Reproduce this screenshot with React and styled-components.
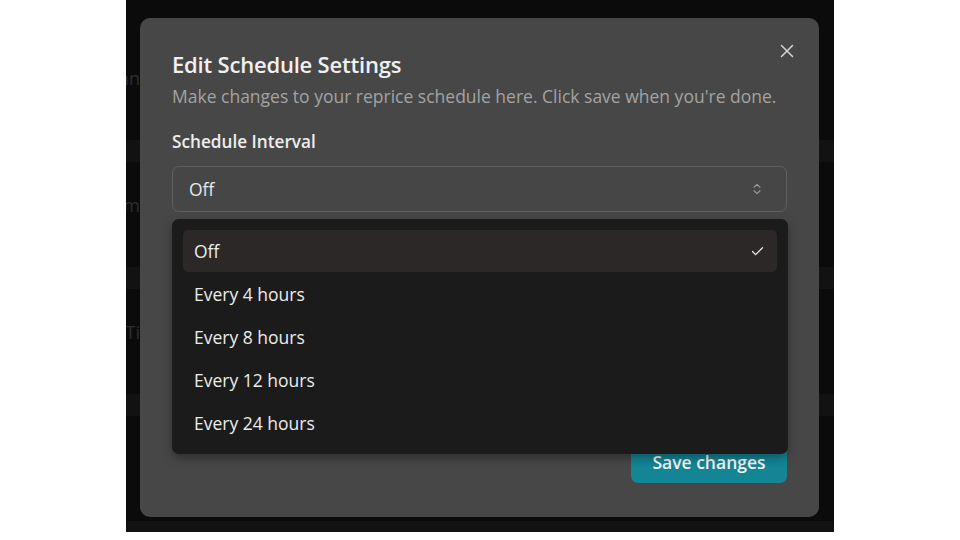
import React from 'react'
import styled, { createGlobalStyle } from 'styled-components'
import { X, Check, ChevronsUpDown } from 'lucide-react'

const GlobalStyle = createGlobalStyle`
  body {
    margin: 0;
    background: #ffffff;
    font-family: "Open Sans", "Noto Sans", sans-serif;
  }
`

const Page = styled.div`
  width: 960px;
  height: 540px;
  display: flex;
  justify-content: center;
`

const Screen = styled.div`
  position: relative;
  width: 708px;
  height: 532px;
  background: #0b0b0b;
  overflow: hidden;
`

const Table = styled.div`
  display: flex;
  flex-direction: column;
  padding-top: 35px;
`

const Row = styled.div`
  height: 105px;
  box-sizing: border-box;
  padding-bottom: 20px;
  display: flex;
  align-items: center;
`

const Band = styled.div`
  height: 22px;
  background: #121212;
`

const Cell = styled.div`
  width: 14px;
  overflow: hidden;
  display: flex;
  justify-content: flex-end;
  white-space: nowrap;
  color: #2e2e2e;
  font-size: 18px;
`

const Modal = styled.div`
  position: absolute;
  left: 14px;
  top: 18px;
  width: 679px;
  height: 499px;
  box-sizing: border-box;
  padding: 32px 32px 34px;
  background: #474747;
  border-radius: 10px;
  display: flex;
  flex-direction: column;
`

const Close = styled.button`
  position: absolute;
  top: 21px;
  right: 20px;
  width: 24px;
  height: 24px;
  padding: 0;
  border: none;
  background: none;
  color: #d6d6d6;
  display: flex;
  align-items: center;
  justify-content: center;
`

const Title = styled.h2`
  margin: 0;
  font-size: 22px;
  font-weight: 600;
  color: #f0f0f0;
  line-height: 28px;
  letter-spacing: -0.2px;
`

const Desc = styled.p`
  margin: 6px 0 0;
  font-size: 17.5px;
  line-height: 24px;
  color: #a3a3a3;
`

const Label = styled.label`
  margin-top: 22px;
  font-size: 17.2px;
  font-weight: 600;
  color: #ededed;
  line-height: 24px;
`

const Field = styled.div`
  position: relative;
  margin-top: 12px;
`

const Trigger = styled.div`
  height: 46px;
  box-sizing: border-box;
  border: 1px solid #5e5e5e;
  border-radius: 7px;
  background: #464646;
  display: flex;
  align-items: center;
  justify-content: space-between;
  padding: 0 22px 0 16px;
  font-size: 17.5px;
  color: #e8e8e8;
  svg {
    color: #9a9a9a;
  }
`

const Menu = styled.div`
  position: absolute;
  left: 0;
  right: -1px;
  top: calc(100% + 7px);
  box-sizing: border-box;
  padding: 11px 11px 10px;
  background: #1b1b1b;
  border-radius: 7px;
  box-shadow: 0 4px 10px rgba(0, 0, 0, 0.35);
  display: flex;
  flex-direction: column;
  gap: 1px;
  z-index: 2;
`

const Item = styled.div`
  height: 42px;
  border-radius: 5px;
  display: flex;
  align-items: center;
  justify-content: space-between;
  padding: 0 12px 0 11px;
  font-size: 17.5px;
  color: #ececec;
  background: ${p => (p.$active ? '#2b2827' : 'transparent')};
`

const Footer = styled.div`
  margin-top: auto;
  display: flex;
  justify-content: flex-end;
`

const SaveButton = styled.button`
  width: 156px;
  height: 42px;
  border: none;
  border-radius: 7px;
  background: #138595;
  color: #f4f4f4;
  font-family: inherit;
  font-size: 17.5px;
  font-weight: 600;
  padding: 0;
`

const options = ['Off', 'Every 4 hours', 'Every 8 hours', 'Every 12 hours', 'Every 24 hours']
const rows = ['Column', 'Platform', 'Ti', '']

export default function App() {
  return (
    <Page>
      <GlobalStyle />
      <Screen>
        <Table>
          {rows.map((r, i) => (
            <React.Fragment key={i}>
              <Row>
                <Cell>{r}</Cell>
              </Row>
              <Band />
            </React.Fragment>
          ))}
        </Table>
        <Modal>
          <Close aria-label="Close">
            <X size={22} strokeWidth={1.6} />
          </Close>
          <Title>Edit Schedule Settings</Title>
          <Desc>Make changes to your reprice schedule here. Click save when you're done.</Desc>
          <Label>Schedule Interval</Label>
          <Field>
            <Trigger>
              <span>Off</span>
              <ChevronsUpDown size={14} strokeWidth={2} />
            </Trigger>
            <Menu>
              {options.map(o => (
                <Item key={o} $active={o === 'Off'}>
                  <span>{o}</span>
                  {o === 'Off' && <Check size={15} strokeWidth={2} />}
                </Item>
              ))}
            </Menu>
          </Field>
          <Footer>
            <SaveButton>Save changes</SaveButton>
          </Footer>
        </Modal>
      </Screen>
    </Page>
  )
}
